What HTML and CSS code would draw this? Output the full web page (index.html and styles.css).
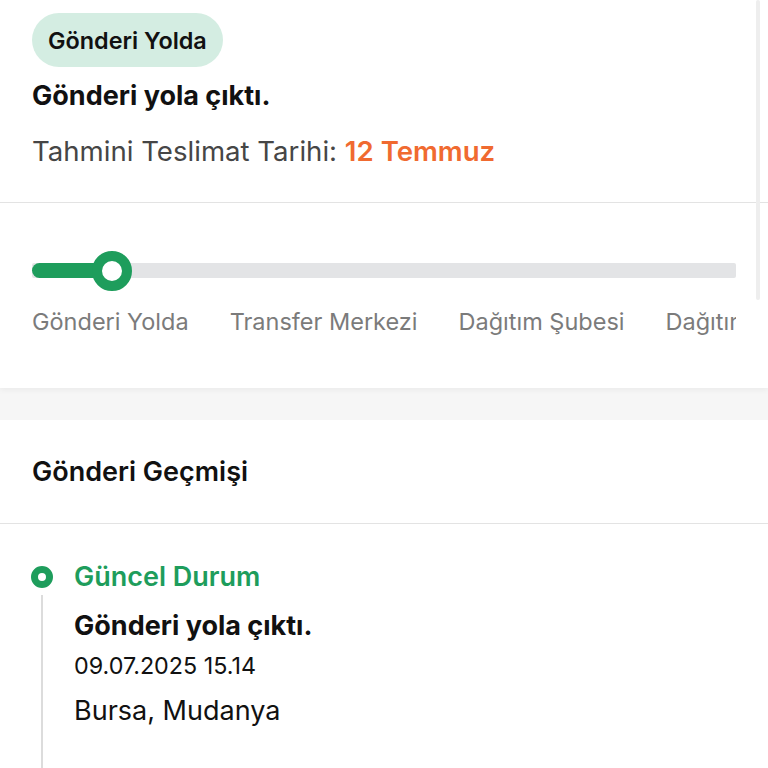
FILE: index.html
```html
<!DOCTYPE html>
<html lang="tr">
<head>
<meta charset="utf-8">
<link rel="stylesheet" href="styles.css">
</head>
<body>
<div class="page">
  <section class="card summary">
    <div class="head">
      <span class="badge">Gönderi Yolda</span>
      <div class="title">Gönderi yola çıktı.</div>
      <div class="eta">Tahmini Teslimat Tarihi: <span class="eta-date">12 Temmuz</span></div>
    </div>
    <div class="progress">
      <div class="track-row">
        <div class="track">
          <div class="fill"></div>
          <div class="knob"></div>
        </div>
      </div>
      <div class="steps">
        <span class="step">Gönderi Yolda</span>
        <span class="step">Transfer Merkezi</span>
        <span class="step">Dağıtım Şubesi</span>
        <span class="step">Dağıtımda</span>
      </div>
    </div>
  </section>
  <div class="band"></div>
  <section class="card history">
    <div class="history-head">Gönderi Geçmişi</div>
    <div class="event">
      <div class="rail">
        <div class="dot"></div>
        <div class="line"></div>
      </div>
      <div class="event-body">
        <div class="ev-status">Güncel Durum</div>
        <div class="ev-title">Gönderi yola çıktı.</div>
        <div class="ev-date">09.07.2025 15.14</div>
        <div class="ev-place">Bursa, Mudanya</div>
      </div>
    </div>
  </section>
  <div class="scrollbar"></div>
</div>
</body>
</html>
```

FILE: styles.css
```css
html, body {
  margin: 0;
  padding: 0;
  background: #ffffff;
}
body {
  font-family: Inter, "Noto Sans", "Liberation Sans", sans-serif;
  color: #111111;
  width: 768px;
  height: 768px;
  overflow: hidden;
}
.page {
  position: relative;
  width: 768px;
}
.card {
  background: #ffffff;
}
.summary {
  box-shadow: 0 2px 6px rgba(0, 0, 0, 0.05);
  position: relative;
  z-index: 1;
}
.head {
  padding: 13px 32px 35px;
  border-bottom: 1px solid #e3e3e3;
}
.badge {
  display: inline-flex;
  align-items: center;
  height: 54px;
  padding: 0 16px;
  border-radius: 27px;
  background: #d4ede2;
  font-size: 23.4px;
  font-weight: 600;
  color: #111;
}
.title {
  margin-top: 13px;
  font-size: 27px;
  line-height: 32px;
  font-weight: 700;
}
.eta {
  margin-top: 23px;
  font-size: 27.6px;
  line-height: 32px;
  color: #464646;
}
.eta-date {
  color: #f06a30;
  font-weight: 600;
}
.progress {
  padding: 47px 32px 52px;
}
.track-row {
  height: 40px;
  display: flex;
  align-items: center;
}
.track {
  position: relative;
  width: 100%;
  height: 15px;
  border-radius: 2px;
  background: #e3e4e6;
}
.fill {
  width: 79px;
  height: 15px;
  border-radius: 8px 0 0 8px;
  background: #1e9d5c;
}
.knob {
  position: absolute;
  left: 60px;
  top: -12px;
  width: 20px;
  height: 20px;
  border: 10px solid #1e9d5c;
  border-radius: 50%;
  background: #ffffff;
}
.steps {
  margin-top: 17px;
  display: flex;
  gap: 41px;
  white-space: nowrap;
  overflow: hidden;
  font-size: 23.5px;
  line-height: 29px;
  color: #7b7b7b;
}
.step {
  flex: none;
}
.band {
  height: 32px;
  background: #f6f6f6;
}
.history-head {
  height: 103px;
  display: flex;
  align-items: center;
  padding: 0 32px;
  border-bottom: 1px solid #e3e3e3;
  font-size: 27px;
  font-weight: 600;
}
.event {
  display: flex;
  gap: 21px;
  padding: 37px 32px 0 31px;
}
.rail {
  width: 22px;
  display: flex;
  flex-direction: column;
  align-items: center;
  padding-top: 5px;
}
.dot {
  width: 8px;
  height: 8px;
  border: 7px solid #1e9d5c;
  border-radius: 50%;
  background: #fff;
}
.line {
  flex: 1;
  width: 2px;
  margin-top: 7px;
  background: #dcdcdc;
}
.event-body {
  padding-bottom: 80px;
}
.ev-status {
  font-size: 27px;
  line-height: 32px;
  font-weight: 600;
  color: #1e9d5c;
}
.ev-title {
  margin-top: 17px;
  font-size: 27px;
  line-height: 32px;
  font-weight: 700;
}
.ev-date {
  margin-top: 10px;
  font-size: 23.3px;
  line-height: 28px;
}
.ev-place {
  margin-top: 15px;
  font-size: 27px;
  line-height: 32px;
}
.scrollbar {
  position: absolute;
  top: 0;
  left: 756px;
  width: 4px;
  height: 300px;
  border-radius: 2px;
  background: #eeeeee;
  z-index: 2;
}
```
